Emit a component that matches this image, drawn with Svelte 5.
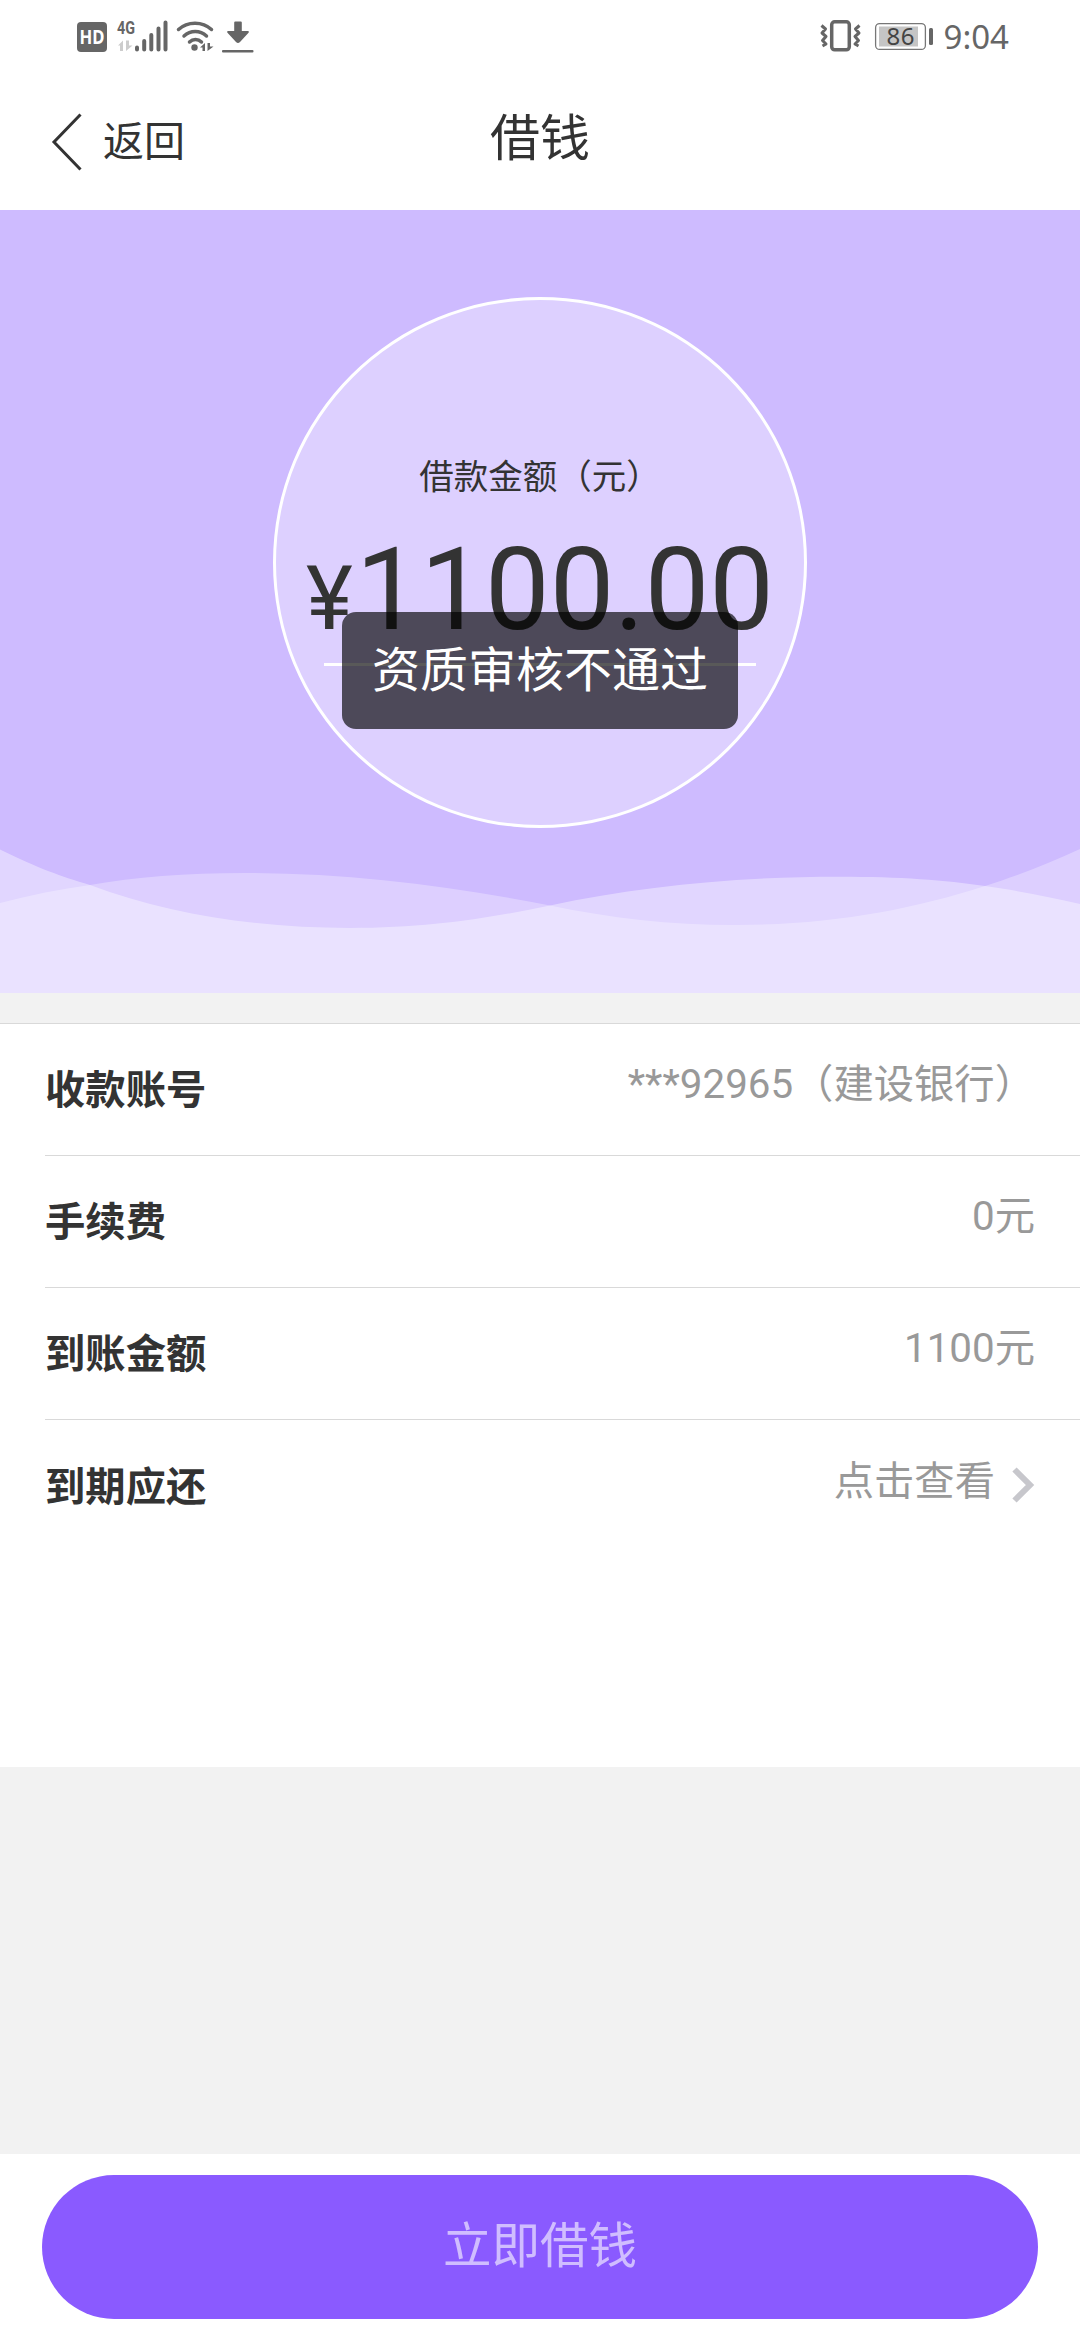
<script>
  const rows = [
    { label: '收款账号', value: '***92965（建设银行）' },
    { label: '手续费', value: '0元' },
    { label: '到账金额', value: '1100元' },
    { label: '到期应还', value: '点击查看', link: true }
  ];

  let amount = '1100.00';
  let toast = '资质审核不通过';
</script>

<main>
  <div class="status">
    <svg class="status-left" width="180" height="60" viewBox="75 0 180 60">
      <rect x="77" y="22" width="30" height="30" rx="4" fill="#666" />
      <text x="79.6" y="44" class="hd" textLength="25" lengthAdjust="spacingAndGlyphs">HD</text>
      <text x="117" y="34" class="net" textLength="18" lengthAdjust="spacingAndGlyphs">4G</text>
      <g fill="#ccc">
        <path d="M118 45.5l5-5v10.5h-3v-5.5zM126 40.500h3v5h3.500l-6.500 5.500z" />
      </g>
      <g stroke="#666" stroke-width="4" stroke-linecap="round">
        <path d="M137 47.500v2M144.200 41v8.500M151.300 35v14.500M158.500 28.500v21M165.500 22.500v27" />
      </g>
      <g fill="none" stroke="#666" stroke-width="3.500" stroke-linecap="round">
        <path d="M178.500 29.500c9-8.500 24-8.500 33 0" />
        <path d="M184 36c6.500-6 16-6 22.500 0" />
        <path d="M189.500 42c3.500-3.500 8.500-3.500 12 0" />
      </g>
      <circle cx="194.500" cy="47.500" r="3.200" fill="#666" />
      <path d="M200 47.500l5-4.500v8h-2.500v-3.500zM207.500 43h2.500v3.500h3.500l-6 4.500z" fill="#666" />
      <path d="M235.200 21.500h5.600q1 0 1 1v8.500h6q2 .300.500 2l-8.300 9q-2 2-4 0l-8.300-9q-1.500-1.700.500-2h6v-8.500q0-1 1-1z" fill="#666" />
      <rect x="222" y="50" width="31.500" height="2.500" rx="1" fill="#666" />
    </svg>
    <div class="status-right">
      <svg width="120" height="60" viewBox="818 0 120 60">
        <rect x="831.700" y="21.800" width="17.600" height="28" rx="3" fill="none" stroke="#666" stroke-width="3.500" />
        <path d="M821.500 25.500l4 3.500-3.500 4 4 3.500-3.500 4 3.500 3.500-3.500 2M859.500 25.500l-4 3.500 3.500 4-4 3.500 3.500 4-3.500 3.500 3.500 2" fill="none" stroke="#666" stroke-width="3" stroke-linejoin="round" />
        <rect x="875.600" y="23.600" width="49.800" height="25.800" rx="4" fill="none" stroke="#777" stroke-width="1.300" />
        <rect x="879" y="26.500" width="39" height="20" fill="#c5c5c5" />
        <rect x="929" y="28" width="4" height="17" rx="1.500" fill="#666" />
        <text x="886.500" y="44.700" class="level" textLength="28">86</text>
      </svg>
      <span class="time">9:04</span>
    </div>
  </div>

  <header>
    <button class="back">
      <svg width="34" height="60" viewBox="0 0 34 60">
        <path d="M30.500 2.500L4 30l26.500 27.500" fill="none" stroke="#333" stroke-width="3" />
      </svg>
      <span>返回</span>
    </button>
    <h1>借钱</h1>
  </header>

  <section class="hero">
    <svg class="waves" width="1080" height="150" viewBox="0 843 1080 150">
      <path d="M0 849.500C40 869 60 876 90 885C170 915 260 928 350 928C430 928 490 918 550 905.500C640 886 740 876.700 840 876.700C900 876.700 945 880 985 886C1020 891 1050 897 1080 904V993H0Z" fill="#fff" fill-opacity=".4" />
      <path d="M0 903C30 895 60 889 90 885C135 877 185 873 245 873C350 873 450 886 550 905.500C610 918 670 925 735 925C830 925 910 910 985 886C1020 875 1050 863 1080 849V993H0Z" fill="#fff" fill-opacity=".3" />
    </svg>
    <div class="circle">
      <p class="caption">借款金额（元）</p>
      <p class="amount"><span>¥</span>{amount}</p>
      <div class="line"></div>
    </div>
    <div class="toast">{toast}</div>
  </section>

  <ul>
    {#each rows as row}
      <li>
        <strong>{row.label}</strong>
        <span class="value">{row.value}</span>
        {#if row.link}
          <svg width="23" height="36" viewBox="0 0 23 36">
            <path d="M2.500 2.500L18 18L2.500 33.500" fill="none" stroke="#c7c7cc" stroke-width="6" />
          </svg>
        {/if}
      </li>
    {/each}
  </ul>

  <footer>
    <button class="submit">立即借钱</button>
  </footer>
</main>

<style>
  :global(body) {
    background: #f2f2f2;
  }
  main {
    display: flex;
    flex-direction: column;
    width: 1080px;
    height: 2340px;
    overflow: hidden;
    background: #f2f2f2;
    color: #333;
    font-family: Roboto, "Noto Sans CJK SC", sans-serif;
  }
  p, h1, ul {
    margin: 0;
    padding: 0;
  }
  button {
    border: 0;
    padding: 0;
    background: none;
    color: inherit;
    font-family: inherit;
  }

  .status {
    display: flex;
    justify-content: space-between;
    height: 74px;
    padding: 0 71px 0 75px;
    background: #fff;
  }
  .status-right {
    display: flex;
    justify-content: space-between;
    width: 191px;
  }
  .hd {
    fill: #fff;
    font: 700 20px "Noto Sans", sans-serif;
  }
  .net {
    fill: #666;
    font: 700 19px Roboto, sans-serif;
  }
  .level {
    fill: #444;
    font: 24px "Noto Sans", sans-serif;
  }
  .time {
    color: #666;
    font: 33px/73px "Noto Sans", sans-serif;
  }

  header {
    display: grid;
    grid-template-columns: 1fr auto 1fr;
    align-items: center;
    height: 136px;
    background: #fff;
  }
  .back {
    display: flex;
    align-items: center;
    gap: 19px;
    padding-left: 50px;
    font-size: 41px;
    line-height: 60px;
  }
  h1 {
    padding-bottom: 6px;
    font-size: 50px;
    font-weight: 400;
    line-height: 60px;
  }

  .hero {
    position: relative;
    display: flex;
    justify-content: center;
    align-items: flex-start;
    height: 783px;
    padding-top: 87px;
    box-sizing: border-box;
    background: #cebbff;
  }
  .waves {
    position: absolute;
    left: 0;
    bottom: 0;
  }
  .circle {
    display: flex;
    flex-direction: column;
    align-items: center;
    width: 534px;
    height: 531px;
    box-sizing: border-box;
    border: 3px solid #fff;
    border-radius: 50%;
    background: #ddd0ff;
  }
  .caption {
    margin-top: 152px;
    font-size: 34.5px;
    line-height: 50px;
  }
  .amount {
    height: 120px;
    margin-top: 28px;
    font-size: 115px;
    line-height: 120px;
    white-space: nowrap;
  }
  .amount span {
    margin-right: 3px;
    font-size: 89px;
  }
  .line {
    width: 432px;
    height: 3px;
    margin-top: 13px;
    background: #fff;
  }
  .toast {
    position: absolute;
    top: 402px;
    left: 342px;
    width: 396px;
    height: 117px;
    border-radius: 14px;
    background: rgba(0, 0, 0, .65);
    color: #fff;
    font-size: 48px;
    line-height: 118px;
    text-align: center;
  }

  ul {
    height: 743px;
    margin-top: 30px;
    border-top: 1px solid #d9d9d9;
    background: #fff;
    list-style: none;
  }
  li {
    display: flex;
    align-items: center;
    height: 132px;
    margin-left: 45px;
    padding-right: 45px;
    box-sizing: border-box;
    border-bottom: 1px solid #d9d9d9;
    font-size: 40.320px;
  }
  li:last-child {
    border: 0;
  }
  strong {
    padding-bottom: 6px;
  }
  .value {
    margin-left: auto;
    padding-bottom: 18px;
    color: #999;
  }
  li svg {
    margin: 0 0 2px 17px;
  }

  footer {
    height: 165px;
    margin-top: auto;
    padding: 21px 42px 0;
    background: #fff;
  }
  .submit {
    display: block;
    width: 996px;
    height: 144px;
    padding-bottom: 10px;
    border-radius: 72px;
    background: #8a5aff;
    color: rgba(255, 255, 255, .6);
    font-size: 48.500px;
  }
</style>
